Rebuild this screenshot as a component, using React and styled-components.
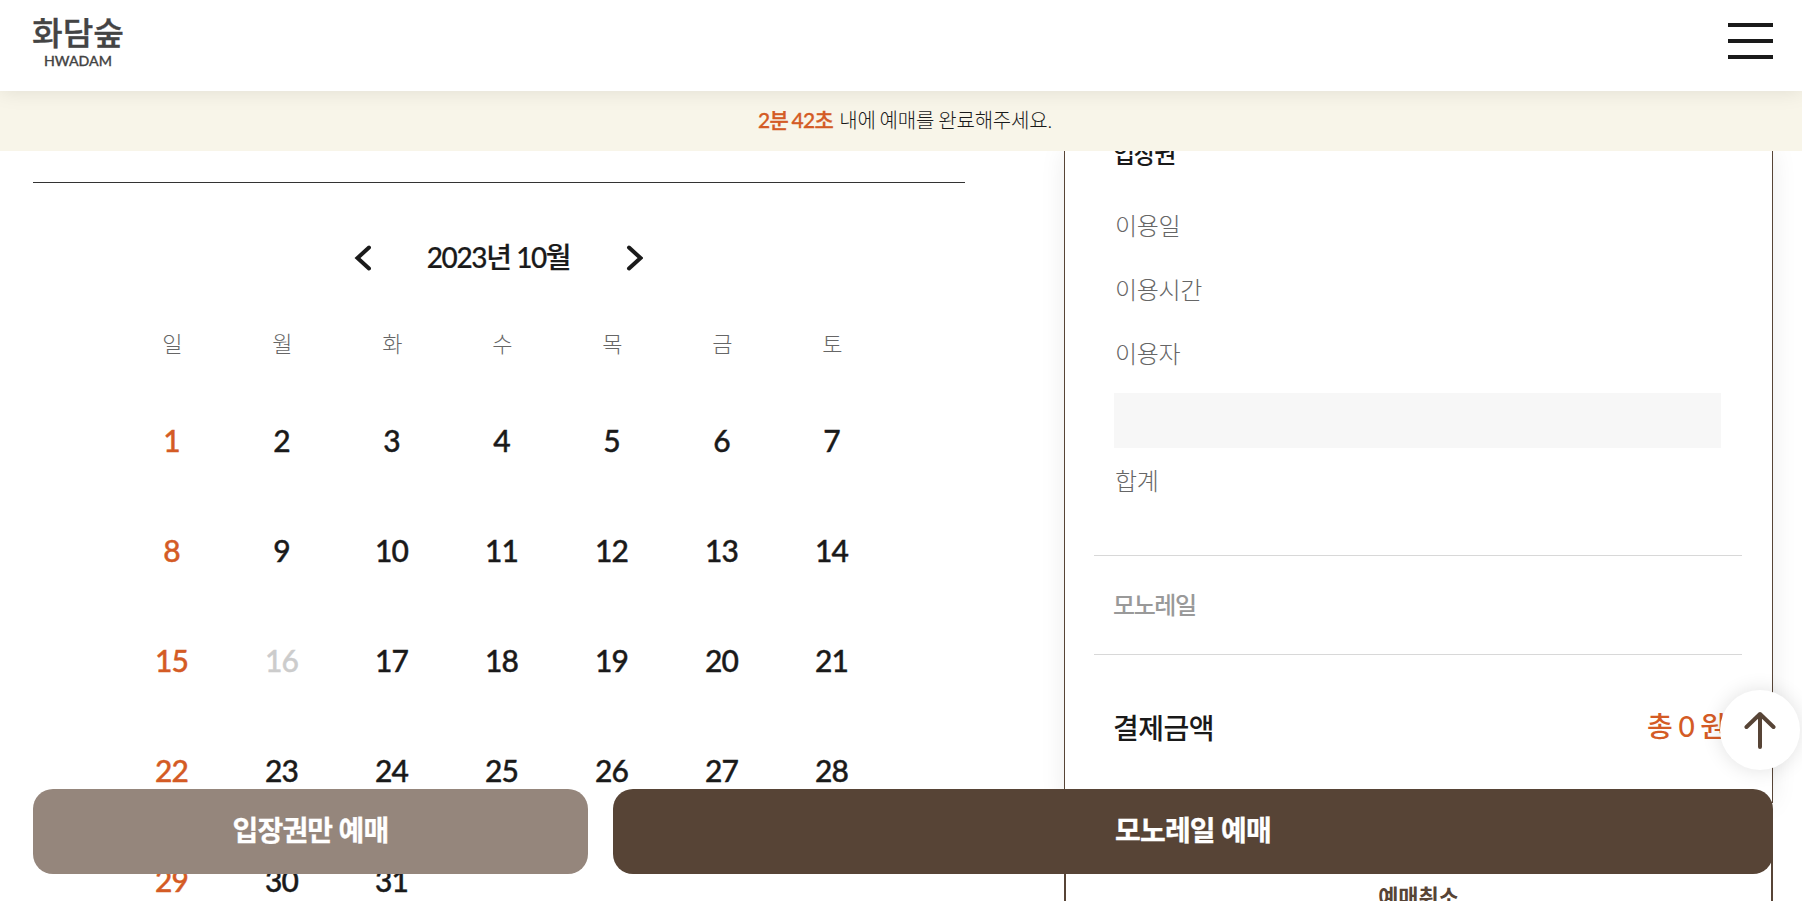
import styled, { createGlobalStyle } from "styled-components";

const WEEKDAYS = ["일", "월", "화", "수", "목", "금", "토"];
const DAYS = Array.from({ length: 31 }, (_, i) => i + 1);
const DISABLED_DAYS = [16];

const App = () => {
  return (
    <Page>
      <GlobalStyle />
      <Header>
        <Logo />
        <MenuButton aria-label="메뉴">
          <span />
          <span />
          <span />
        </MenuButton>
      </Header>
      <Notice>
        <p>
          <strong>2분 42초</strong> 내에 예매를 완료해주세요.
        </p>
      </Notice>
      <Main>
        <Calendar />
        <Summary />
      </Main>
      <TopButton aria-label="위로">
        <svg width="32" height="40" viewBox="0 0 32 40">
          <path d="M16 37V4M2.500 17L16 4L29.500 17" fill="none" stroke="#574436" strokeWidth="4" strokeLinecap="round" strokeLinejoin="round" />
        </svg>
      </TopButton>
      <BottomBar>
        <BookButton $width="555px" $color="#95867c">입장권만 예매</BookButton>
        <BookButton $color="#574436">모노레일 예매</BookButton>
      </BottomBar>
    </Page>
  );
};

export default App;

const Logo = () => (
  <LogoSvg width="92" height="54" viewBox="0 0 92 54">
    <LogoText x="-1" y="29.500" $size={32} $weight={500} textLength="92" lengthAdjust="spacingAndGlyphs">
      화담숲
    </LogoText>
    <LogoText x="11" y="51" $size={14} $weight={400} textLength="68" lengthAdjust="spacingAndGlyphs">
      HWADAM
    </LogoText>
  </LogoSvg>
);

const Calendar = () => (
  <CalendarSection>
    <MonthNav>
      <svg width="17" height="26" viewBox="0 0 17 26">
        <path d="M15 2.500L3.500 13L15 23.500" fill="none" stroke="#1a1a1a" strokeWidth="4" strokeLinecap="round" />
      </svg>
      <h2>2023년 10월</h2>
      <svg width="17" height="26" viewBox="0 0 17 26">
        <path d="M3 2.500L14.500 13L3 23.500" fill="none" stroke="#1a1a1a" strokeWidth="4" strokeLinecap="round" />
      </svg>
    </MonthNav>
    <Week>
      {WEEKDAYS.map((name) => (
        <span key={name}>{name}</span>
      ))}
    </Week>
    <Days>
      {DAYS.map((day) => (
        <Day key={day} $sunday={day % 7 === 1} $disabled={DISABLED_DAYS.includes(day)}>
          {day}
        </Day>
      ))}
    </Days>
  </CalendarSection>
);

const Summary = () => (
  <SummaryColumn>
    <SummaryBox>
      <Ticket>
        <GroupTitle>입장권</GroupTitle>
        <Label>이용일</Label>
        <Label>이용시간</Label>
        <Label>이용자</Label>
        <UserBox />
        <Label>합계</Label>
      </Ticket>
      <Monorail>
        <GroupTitle $muted>모노레일</GroupTitle>
      </Monorail>
      <Total>
        <dt>결제금액</dt>
        <dd>총 0 원</dd>
      </Total>
    </SummaryBox>
    <CancelButton>예매취소</CancelButton>
  </SummaryColumn>
);

const GlobalStyle = createGlobalStyle`
  * {
    box-sizing: border-box;
    margin: 0;
    padding: 0;
  }
  body {
    overflow: hidden;
    background: #fff;
    color: #1a1a1a;
    font-family: "Lato Medium", Lato, "Noto Sans CJK KR", sans-serif;
    letter-spacing: -0.5px;
  }
  button {
    border: 0;
    font-family: inherit;
    letter-spacing: inherit;
  }
`;

const Page = styled.div`
  display: flex;
  flex-direction: column;
  height: 901px;
  overflow: hidden;
`;

const Header = styled.header`
  position: relative;
  z-index: 3;
  display: flex;
  flex-shrink: 0;
  align-items: flex-start;
  justify-content: space-between;
  height: 91px;
  padding: 15px 29px 0 33px;
  background: #fff;
  box-shadow: 0 0 20px rgba(0, 0, 0, 0.1);
`;

const LogoSvg = styled.svg`
  overflow: visible;
`;

const LogoText = styled.text`
  fill: #444;
  stroke: #444;
  stroke-width: 0.3px;
  font-size: ${({ $size }) => $size}px;
  font-weight: ${({ $weight }) => $weight};
  letter-spacing: 0;
`;

const MenuButton = styled.button`
  display: flex;
  flex-direction: column;
  justify-content: space-between;
  width: 45px;
  height: 36px;
  margin-top: 8px;
  background: none;
  span {
    height: 3.6px;
    background: #1a1a1a;
  }
`;

const Notice = styled.div`
  position: relative;
  z-index: 2;
  display: flex;
  flex-shrink: 0;
  align-items: center;
  justify-content: center;
  height: 60px;
  padding: 0 0 4px 8px;
  background: #f8f5e9;
  font-family: Lato, "Noto Sans CJK KR", sans-serif;
  font-size: 20px;
  font-weight: 300;
  letter-spacing: -0.2px;
  word-spacing: -1.2px;
  strong {
    margin-right: 2px;
    color: #d45b25;
    font-family: "Lato Medium", Lato, "Noto Sans CJK KR", sans-serif;
    font-size: 21px;
    font-weight: 500;
    letter-spacing: -0.7px;
    -webkit-text-stroke: 0.3px;
  }
`;

const Main = styled.main`
  display: flex;
  justify-content: space-between;
  padding: 0 29px 0 33px;
`;

const CalendarSection = styled.section`
  width: 932px;
  height: 800px;
  margin-top: 31px;
  padding: 0 78px 0 84px;
  border-top: 1px solid #333;
`;

const MonthNav = styled.div`
  display: flex;
  align-items: center;
  justify-content: space-between;
  width: 289px;
  height: 40px;
  margin: 55px 0 0 237px;
  h2 {
    padding-bottom: 3px;
    font-size: 28px;
    font-weight: 500;
    letter-spacing: -1.4px;
    line-height: 40px;
    -webkit-text-stroke: 0.2px;
  }
`;

const Week = styled.div`
  display: grid;
  grid-template-columns: repeat(7, 110px);
  margin-top: 48px;
  color: #666;
  font-size: 22px;
  font-weight: 300;
  line-height: 36px;
  text-align: center;
`;

const Days = styled.div`
  display: grid;
  grid-template-columns: repeat(7, 110px);
  grid-auto-rows: 110px;
  margin-top: 23px;
`;

const Day = styled.div`
  display: flex;
  align-items: center;
  justify-content: center;
  padding-right: 1px;
  color: ${({ $sunday, $disabled }) => ($disabled ? "#ccc" : $sunday ? "#d45b25" : "#1a1a1a")};
  font-size: 30px;
  font-weight: 500;
  letter-spacing: -1px;
  -webkit-text-stroke: 0.4px;
`;

const SummaryColumn = styled.aside`
  width: 709px;
`;

const SummaryBox = styled.div`
  height: 652px;
  padding: 0 30px 0 29px;
  border: 1px solid #574436;
  border-top: 0;
  box-shadow: 0 0 24px rgba(0, 0, 0, 0.08);
`;

const Ticket = styled.div`
  display: flex;
  flex-direction: column;
  height: 405px;
  padding: 0 20px;
  border-bottom: 1px solid #d8d8d8;
  h3 {
    flex-shrink: 0;
    margin-top: -15px;
    margin-bottom: 22px;
  }
`;

const GroupTitle = styled.h3`
  margin-left: -1px;
  color: ${({ $muted }) => ($muted ? "#999" : "#1a1a1a")};
  font-size: 24px;
  font-weight: 500;
  letter-spacing: -1.4px;
  line-height: 36px;
`;

const Label = styled.p`
  padding-left: 1px;
  color: #666;
  font-size: 24px;
  font-weight: 300;
  letter-spacing: -0.3px;
  line-height: 64px;
`;

const UserBox = styled.div`
  flex-shrink: 0;
  height: 55px;
  margin: 7px 1px 1px 0;
  background: #f7f7f7;
`;

const Monorail = styled.div`
  height: 99px;
  padding: 31px 20px 0;
  border-bottom: 1px solid #d8d8d8;
`;

const Total = styled.dl`
  display: flex;
  justify-content: space-between;
  padding: 53px 16px 0 19px;
  font-size: 28px;
  font-weight: 500;
  line-height: 40px;
  dd {
    margin-top: -2px;
    color: #d45b25;
    letter-spacing: 0;
    word-spacing: -1.5px;
  }
`;

const CancelButton = styled.button`
  width: 100%;
  height: 83px;
  margin-top: 50px;
  border: 2px solid #574436;
  background: #fff;
  color: #574436;
  font-size: 22px;
  font-weight: 700;
  letter-spacing: -0.1px;
`;

const TopButton = styled.button`
  position: fixed;
  right: 2px;
  bottom: 131px;
  z-index: 4;
  display: flex;
  align-items: center;
  justify-content: center;
  width: 80px;
  height: 80px;
  border-radius: 50%;
  background: #fff;
  box-shadow: 0 0 20px rgba(0, 0, 0, 0.12);
`;

const BottomBar = styled.div`
  position: fixed;
  right: 29.500px;
  bottom: 27px;
  left: 32.500px;
  z-index: 3;
  display: flex;
  gap: 25px;
`;

const BookButton = styled.button`
  flex: ${({ $width }) => ($width ? `0 0 ${$width}` : "1")};
  height: 85px;
  padding: 0 0 6px 1px;
  border-radius: 20px;
  background: ${({ $color }) => $color};
  color: #fff;
  font-size: 28px;
  font-weight: 700;
  letter-spacing: -0.8px;
  -webkit-text-stroke: 0.3px;
`;
